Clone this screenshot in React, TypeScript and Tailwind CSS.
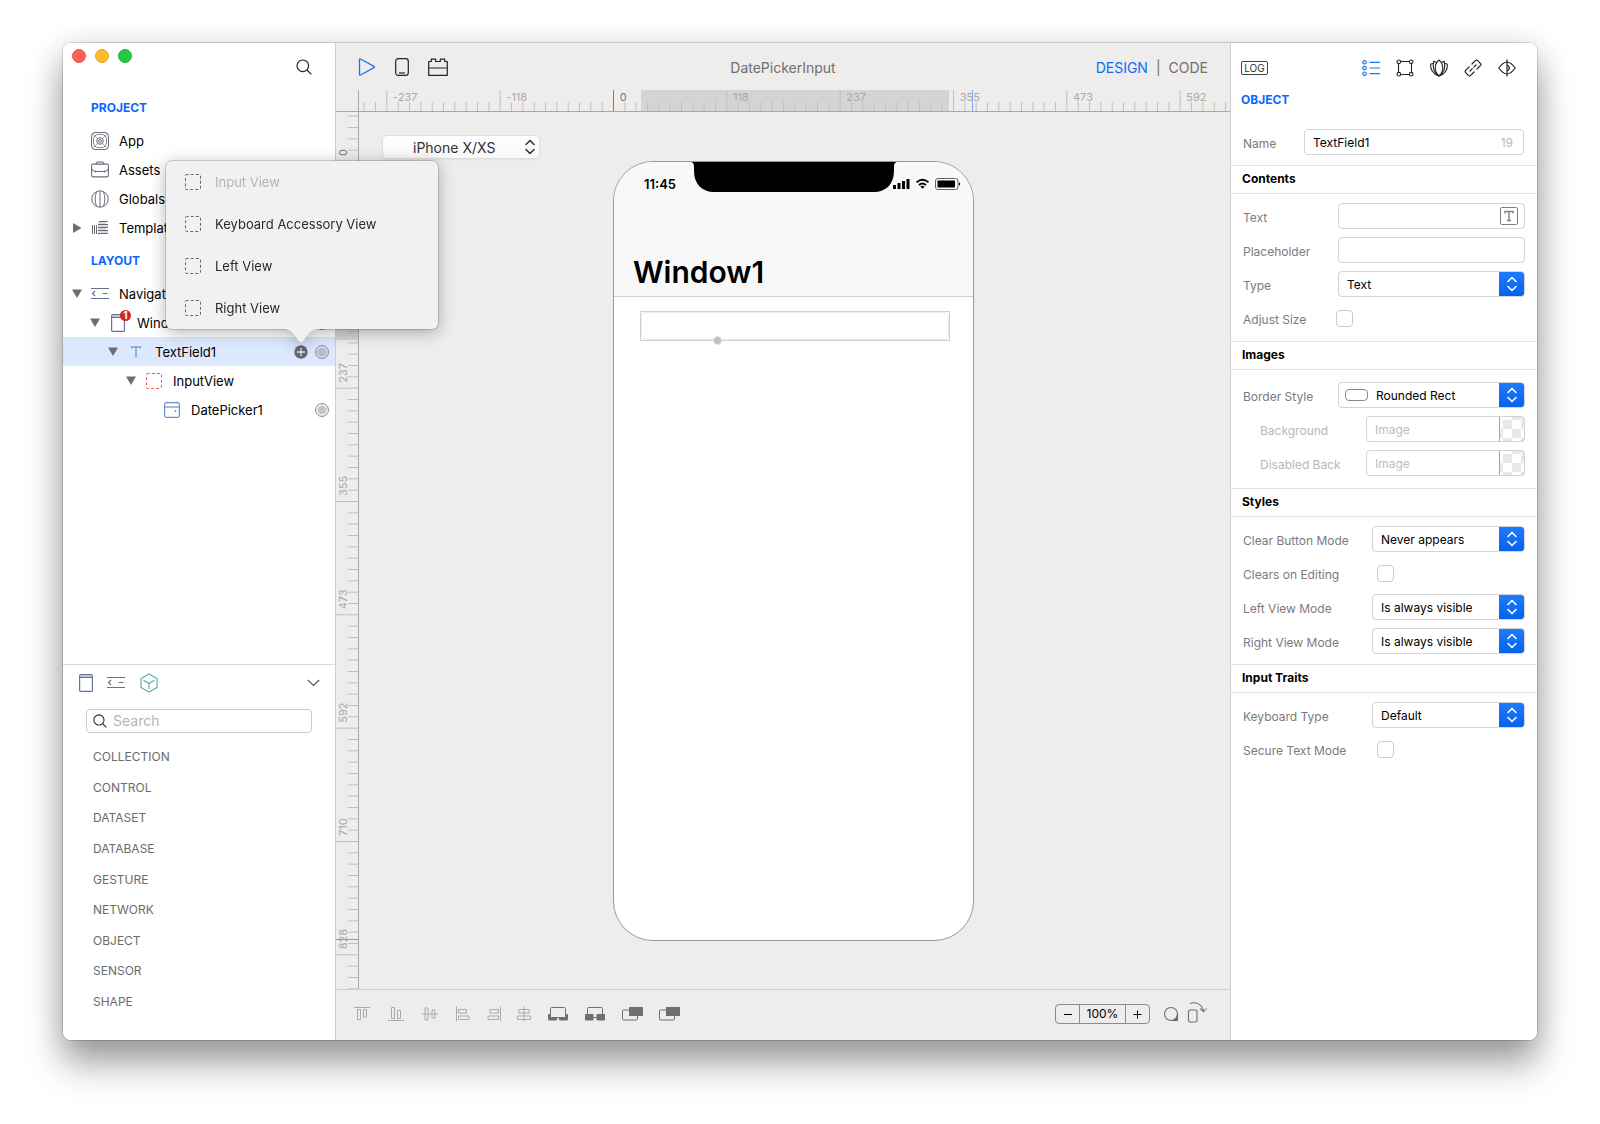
import type { ReactNode } from "react";

const STEP = 34 / 3;

function Magnifier({ className }: { className?: string }) {
  return (
    <svg className={className} width="16" height="16" viewBox="0 0 16 16" fill="none" stroke="#222" strokeWidth="1.2">
      <circle cx="6.8" cy="6.8" r="5.8" />
      <path d="M11 11l4.3 4.3" />
    </svg>
  );
}

function AppIcon() {
  return (
    <svg width="18" height="18" viewBox="0 0 18 18" fill="none" stroke="#6b6b78" strokeWidth="1">
      <rect x="0.5" y="0.5" width="17" height="17" rx="3.5" />
      <rect x="2.5" y="2.5" width="13" height="13" rx="4.5" strokeWidth="0.8" />
      <circle cx="9" cy="9" r="3.3" />
      <circle cx="9" cy="9" r="1.4" />
      <path d="M2 2l4.6 4.6M16 2l-4.6 4.6M2 16l4.6-4.6M16 16l-4.6-4.6" strokeWidth="0.6" />
    </svg>
  );
}

function AssetsIcon() {
  return (
    <svg width="18" height="18" viewBox="0 0 18 18" fill="none" stroke="#6b6b78" strokeWidth="1.1">
      <rect x="0.6" y="3.1" width="16.8" height="12.8" rx="1.6" />
      <path d="M5 3L6.2 1h5.6L13 3M0.8 8c1 2 2 2.500 3.200 2.500h10c1.200 0 2.200-.5 3.200-2.500" />
      <path d="M4.500 9.500v2M13.500 9.500v2" />
    </svg>
  );
}

function GlobalsIcon() {
  return (
    <svg width="18" height="18" viewBox="0 0 18 18" fill="none" stroke="#6b6b78" strokeWidth="1">
      <circle cx="9" cy="9" r="8.200" />
      <path d="M9 1v16M5.500 1.800c-1.800 4.500-1.800 10 0 14.400M12.500 1.800c1.800 4.500 1.800 10 0 14.400" />
    </svg>
  );
}

function TemplatesIcon() {
  return (
    <svg width="18" height="18" viewBox="0 0 18 18" fill="none" stroke="#6b6b78" strokeWidth="1">
      <path d="M1.500 6v9M3.500 6v9M5.500 6v9M8 2.500h9M7 5.500h10M7 8.500h10M7 11.500h10M7 14.500h10" />
      <path d="M7 4h8M7 7h10M7 10h8M7 13h10" strokeWidth="0.500" />
    </svg>
  );
}

function NavigationIcon() {
  return (
    <svg width="18" height="18" viewBox="0 0 18 18" fill="none" stroke="#66728f" strokeWidth="1.200">
      <path d="M0 3.500h18M0 13.500h18M4 6L1.500 8.500L4 11M11.500 8.500h5" />
    </svg>
  );
}

function WindowIcon() {
  return (
    <svg width="18" height="18" viewBox="0 0 18 18" fill="none" stroke="#66759b" strokeWidth="1.200">
      <rect x="2.600" y="0.600" width="12.800" height="16.800" rx="1" />
      <path d="M2.600 3.400h12.800" />
      <path d="M3 2h12" strokeWidth="1.600" stroke="#b3bdd2" />
    </svg>
  );
}

function DashedSquare({ stroke }: { stroke: string }) {
  return (
    <svg width="18" height="18" viewBox="0 0 18 18" fill="none" stroke={stroke} strokeWidth="1">
      <rect x="1.500" y="1.500" width="15" height="15" rx="1.200" strokeDasharray="3 2.100" strokeDashoffset="1" />
    </svg>
  );
}

function DatePickerIcon() {
  return (
    <svg width="18" height="18" viewBox="0 0 18 18" fill="none" stroke="#6f8fca" strokeWidth="1.200">
      <rect x="1.600" y="1.600" width="14.800" height="14.800" rx="1.800" />
      <path d="M1.600 6h14.800" />
      <circle cx="12.500" cy="10" r="1" fill="#6f8fca" stroke="none" />
    </svg>
  );
}

function CubeIcon() {
  return (
    <svg width="18" height="20" viewBox="0 0 18 20" fill="none" stroke="#5ba6a6" strokeWidth="1.100" strokeLinejoin="round">
      <path d="M9 1l8 4.500v9L9 19l-8-4.500v-9z" />
      <path d="M9 16V10.500M9 10.500L3.500 7.300M9 10.500l5.500-3.200" />
    </svg>
  );
}

function Chevrons({ stroke, className }: { stroke: string; className?: string }) {
  return (
    <svg className={className} width="12" height="16" viewBox="0 0 12 16" fill="none" stroke={stroke} strokeWidth="1.600" strokeLinecap="round" strokeLinejoin="round">
      <path d="M2 5.500l4-4 4 4M2 10.500l4 4 4-4" />
    </svg>
  );
}

function Triangle({ open }: { open: boolean }) {
  return (
    <svg width="10" height="10" viewBox="0 0 10 10" fill="#6e6e72">
      {open ? <path d="M0 0.500h10L5 9z" /> : <path d="M1 0l8.500 5L1 10z" />}
    </svg>
  );
}

function Target() {
  return (
    <button className="shrink-0" aria-label="Outlet">
      <svg width="14" height="14" viewBox="0 0 14 14">
        <circle cx="7" cy="7" r="6.400" fill="none" stroke="#7c7c80" />
        <circle cx="7" cy="7" r="4.600" fill="#8e8e93" fillOpacity="0.500" />
      </svg>
    </button>
  );
}

const subviews = [
  { label: "Input View", off: true },
  { label: "Keyboard Accessory View", off: false },
  { label: "Left View", off: false },
  { label: "Right View", off: false },
];

function SubviewMenu() {
  return (
    <div className="absolute bottom-[30px] -left-[128px] w-[272px] drop-shadow-[0_3px_8px_rgba(0,0,0,0.3)]">
      <ul className="rounded-md bg-[#f1f1f1] ring-1 ring-black/15">
        {subviews.map((v) => (
          <li key={v.label}>
            <button
              disabled={v.off}
              className="flex h-[42px] w-full items-center gap-[13px] pl-[18px] text-left text-[#2a2a2a] disabled:text-[#b4b4b4]"
            >
              <DashedSquare stroke="#6a6a6a" />
              <span className="pt-0.5">{v.label}</span>
            </button>
          </li>
        ))}
      </ul>
      <svg className="absolute top-full left-[118px]" width="34" height="14" viewBox="0 0 34 14">
        <path d="M0 0C6 0 9 4 12 8c2 3 3.500 5 5 5s3-2 5-5c3-4 6-8 12-8z" fill="#f1f1f1" />
      </svg>
    </div>
  );
}

type RowProps = {
  label: string;
  icon: ReactNode;
  indent: string;
  open?: boolean;
  outlet?: boolean;
  selected?: boolean;
};

function TreeRow({ label, icon, indent, open, outlet, selected }: RowProps) {
  return (
    <li className={`flex h-[29px] items-center pr-1.5 ${indent} ${selected ? "bg-[#dce8fd]" : ""}`}>
      <span className="w-[19px] shrink-0">{open !== undefined && <Triangle open={open} />}</span>
      <span className="mr-2.5 flex w-[18px] shrink-0 justify-center">{icon}</span>
      <span className="flex-1 pt-0.5 whitespace-nowrap">{label}</span>
      {selected && (
        <div className="relative mr-[7px] flex h-3.5 w-3.5">
          <button aria-label="Add subview">
            <svg width="14" height="14" viewBox="0 0 14 14">
              <circle cx="7" cy="7" r="6.700" fill="#66666d" />
              <path d="M7 3v8M3 7h8" stroke="#dce8fd" strokeWidth="1.300" />
            </svg>
          </button>
          <SubviewMenu />
        </div>
      )}
      {outlet && <Target />}
    </li>
  );
}

const categories = ["COLLECTION", "CONTROL", "DATASET", "DATABASE", "GESTURE", "NETWORK", "OBJECT", "SENSOR", "SHAPE"];

function Sidebar() {
  return (
    <aside className="relative z-10 flex w-[273px] shrink-0 flex-col rounded-l-lg border-r border-[#cfcfcf] bg-white text-[13px]">
      <header className="flex h-[54px] items-start pt-1.5 pr-[23px] pl-[9px]">
        <div className="flex flex-1 gap-[9px]">
          <button aria-label="Close" className="size-3.5 rounded-full border border-[#e2554d] bg-[#fe5f57]" />
          <button aria-label="Minimize" className="size-3.5 rounded-full border border-[#e5a62c] bg-[#febc2e]" />
          <button aria-label="Zoom" className="size-3.5 rounded-full border border-[#24b03a] bg-[#28c840]" />
        </div>
        <button aria-label="Find" className="mt-2.5">
          <Magnifier />
        </button>
      </header>
      <h2 className="h-[21px] pl-7 text-[12px] leading-[21px] font-bold text-[#0a66ff]">PROJECT</h2>
      <ul className="mt-2">
        <TreeRow label="App" icon={<AppIcon />} indent="pl-[9px]" />
        <TreeRow label="Assets" icon={<AssetsIcon />} indent="pl-[9px]" />
        <TreeRow label="Globals" icon={<GlobalsIcon />} indent="pl-[9px]" />
        <TreeRow label="Templates" icon={<TemplatesIcon />} indent="pl-[9px]" open={false} />
      </ul>
      <h2 className="mt-2 h-[21px] pl-7 text-[12px] leading-[21px] font-bold text-[#0a66ff]">LAYOUT</h2>
      <ul className="mt-2 flex-1">
        <TreeRow label="Navigation" icon={<NavigationIcon />} indent="pl-[9px]" open />
        <TreeRow
          label="Window1"
          indent="pl-[27px]"
          open
          outlet
          icon={
            <span className="relative">
              <WindowIcon />
              <span className="absolute -top-1 -right-1 size-[11px] rounded-full bg-[#dc1f1f] text-center text-[10px] leading-[11px] font-bold text-white">
                1
              </span>
            </span>
          }
        />
        <TreeRow
          label="TextField1"
          indent="pl-[45px]"
          open
          outlet
          selected
          icon={
            <svg width="10" height="12" viewBox="0 0 10 12" fill="none" stroke="#7d9ad6" strokeWidth="1.400">
              <path d="M0.500 2.500V1h9v1.500M5 1v10.500" />
            </svg>
          }
        />
        <TreeRow label="InputView" icon={<DashedSquare stroke="#e0605a" />} indent="pl-[63px]" open />
        <TreeRow label="DatePicker1" icon={<DatePickerIcon />} indent="pl-[81px]" outlet />
      </ul>
      <section className="flex h-[376px] flex-col border-t border-[#d9d9d9] pb-7">
        <div className="flex h-9 shrink-0 items-center pr-[15px] pl-[14px]">
          <button aria-label="Windows"><WindowIcon /></button>
          <button aria-label="Navigation" className="ml-3"><NavigationIcon /></button>
          <button aria-label="Objects" className="ml-[15px]"><CubeIcon /></button>
          <button aria-label="Collapse" className="ml-auto">
            <svg width="13" height="8" viewBox="0 0 13 8" fill="none" stroke="#555" strokeWidth="1.100">
              <path d="M0.800 1l5.700 5.500L12.200 1" />
            </svg>
          </button>
        </div>
        <label className="mt-2 mr-[23px] ml-[23px] flex h-6 shrink-0 items-center gap-1.5 rounded-[4px] border border-[#cacaca] pl-1.5">
          <Magnifier className="size-[14px] shrink-0" />
          <input
            type="text"
            aria-label="Search"
            placeholder="Search"
            className="h-5 min-w-0 flex-1 bg-transparent text-[14px] leading-5 outline-none placeholder:text-[#b5b5b5]"
          />
        </label>
        <ul className="mt-[14px] flex flex-1 flex-col justify-between pl-[30px] text-[12px] text-[#6b6b6b]">
          {categories.map((c) => (
            <li key={c} className="h-5 leading-5">{c}</li>
          ))}
        </ul>
      </section>
    </aside>
  );
}

function TopRuler() {
  const ticks = Array.from({ length: 78 }, (_, i) => i - 22);
  return (
    <svg className="h-[22px] w-full shrink-0" fontSize="11" fill="#a9a9a7">
      <rect x="305" y="0" width="308" height="21" fill="#d5d4d2" />
      {ticks.map((i) => {
        const x = 277.500 + i * STEP;
        return <line key={i} x1={x} x2={x} y1={i % 10 === 0 ? 0 : 12} y2="21" stroke="#bfbfbd" />;
      })}
      {["-237", "-118", "0", "118", "237", "355", "473", "592"].map((t, i) => (
        <text key={t} x={57 + i * STEP * 10} y="11" fill={t === "0" ? "#777" : undefined}>
          {t}
        </text>
      ))}
      <line x1="277.500" x2="277.500" y1="0" y2="21" stroke="#4d84f0" />
      <line x1="636.500" x2="636.500" y1="0" y2="21" stroke="#7ba4f5" />
      <line x1="22.500" x2="22.500" y1="0" y2="22" stroke="#a9a9a9" />
      <line x1="0" x2="100%" y1="21.500" y2="21.500" stroke="#a9a9a9" />
    </svg>
  );
}

function SideRuler() {
  const ticks = Array.from({ length: 78 }, (_, i) => i - 4);
  return (
    <svg className="w-[23px] shrink-0 self-stretch" fontSize="11" fill="#a9a9a7">
      <rect x="0" y="199" width="22" height="29" fill="#d5d4d2" />
      {ticks.map((i) => {
        const y = 49.500 + i * STEP;
        return <line key={i} x1={i !== 0 && i % 10 === 0 ? 0 : 12} x2="22" y1={y} y2={y} stroke="#bfbfbd" />;
      })}
      {["0", "118", "237", "355", "473", "592", "710", "828"].map((t, i) => (
        <text key={t} transform={`translate(11 ${44 + i * STEP * 10}) rotate(-90)`} fill={t === "0" ? "#777" : undefined}>
          {t}
        </text>
      ))}
      <line x1="0" x2="22" y1="827.500" y2="827.500" stroke="#6f9cf5" />
      <line x1="22.500" x2="22.500" y1="0" y2="100%" stroke="#a9a9a9" />
    </svg>
  );
}

function Phone() {
  return (
    <div className="relative flex h-[780px] w-[361px] flex-col overflow-hidden rounded-[40px] border border-[#999] bg-white text-black">
      <svg className="absolute top-0 left-[76px]" width="208" height="30" viewBox="0 0 208 30">
        <path d="M0 0h208c-3 0-4 1.500-4 5v4c0 13-8 21-20 21H24C12 30 4 22 4 9V5c0-3.500-1-5-4-5z" />
      </svg>
      <div className="flex h-[135px] flex-col justify-between border-b border-[#cfcfcf] bg-[#f8f8f8] pr-3 pl-[19px]">
        <div className="flex items-center pt-3.5 pl-[11px]">
          <span className="flex-1 text-[13px] leading-4 font-semibold">11:45</span>
          <svg width="68" height="12" viewBox="0 0 68 12">
            <path d="M0 7h3v4H0zM4.500 5h3v6h-3zM9 3h3v8H9zM13.500 1h3v10h-3z" />
            <g fill="none" stroke="#000" strokeWidth="1.800">
              <path d="M23.500 4.400c3.700-3.300 8.300-3.300 12 0M26 7c2.200-1.900 4.800-1.900 7 0" />
            </g>
            <path d="M27.300 8.500c1.400-1.100 3-1.100 4.400 0L29.500 10.800z" />
            <rect x="42.500" y="0.500" width="22.500" height="11" rx="2.500" fill="none" stroke="#666" />
            <rect x="44.500" y="2.500" width="17.500" height="7" rx="0.800" />
            <path d="M66 4.200c1.600.5 1.600 3 0 3.600z" />
          </svg>
        </div>
        <h1 className="pb-1 text-[30px] leading-10 font-semibold">Window1</h1>
      </div>
      <div className="relative mr-[23px] ml-[26px] mt-3.5 border border-[#cfcfcf]">
        <input aria-label="TextField1" type="text" className="block h-7 w-full rounded-[5px] border border-[#ececec] outline-none" />
        <span className="absolute -bottom-[5px] left-[72px] size-[9px] rounded-full border border-[#e3e3e3] bg-[#bfbfbf]" />
      </div>
    </div>
  );
}

const alignTools = [
  { label: "Align top", box: "w-[18px]", d: "M0 1.500h16M3.500 3.500h3v10h-3zM9.500 3.500h3v7.500h-3z" },
  { label: "Align bottom", box: "w-[18px]", d: "M0 14.500h16M3.500 1.500h3v11h-3zM9.500 4.500h3v8h-3z" },
  { label: "Align middle", box: "w-[18px]", d: "M0 8h16M3 2h3v12H3zM10 4h3v8h-3z" },
  { label: "Align left", box: "w-[15px]", d: "M1.500 0.500v15M3.500 3.500h8v3.500h-8zM3.500 10h10.500v3.500H3.500z" },
  { label: "Align right", box: "w-[15px]", d: "M14.500 0.500v15M4 3.500h8.500v3.500H4zM2 10h10.500v3.500H2z" },
  { label: "Align center", box: "w-[14px]", d: "M8 0.500v15M3 3.500h10v3.500H3zM1.500 10h13v3.500h-13z" },
];

function BottomBar() {
  return (
    <footer className="flex h-[51px] shrink-0 items-center border-t border-[#cfcfcd] pr-[23px] pb-0.5 pl-[17px]">
      <div className="flex items-center gap-4">
        {alignTools.map((t) => (
          <button key={t.label} aria-label={t.label} className={`flex justify-center ${t.box}`}>
            <svg className="shrink-0" width="16" height="16" viewBox="0 0 16 16" fill="none" stroke="#aaaaa8" strokeWidth="1">
              <path d={t.d} />
            </svg>
          </button>
        ))}
        <div className="flex gap-[15px]">
          <button aria-label="Embed">
            <svg width="22" height="16" viewBox="0 0 22 16" fill="none" stroke="#6f6f6f">
              <path d="M1.500 8.500H4v3h5.500V14h-8zM20.500 8.500H18v3h-5.500V14h8z" fill="#6f6f6f" />
              <rect x="3.500" y="1.500" width="15" height="10" rx="1" fill="#eeedeb" />
            </svg>
          </button>
          <button aria-label="Unembed">
            <svg width="22" height="16" viewBox="0 0 22 16" fill="none" stroke="#6f6f6f">
              <path d="M3.500 9V2.500q0-1 1-1h13q1 0 1 1V9M9 11.500h4" />
              <path d="M1.500 8.500h7.500V14H1.500zM13 8.500h7.500V14H13z" fill="#6f6f6f" />
            </svg>
          </button>
          <button aria-label="Bring forward">
            <svg width="22" height="16" viewBox="0 0 22 16" fill="none" stroke="#6f6f6f">
              <rect x="1.500" y="4" width="15" height="10" rx="1" />
              <rect x="8.500" y="1.500" width="13" height="8" fill="#6f6f6f" />
            </svg>
          </button>
          <button aria-label="Send backward">
            <svg width="22" height="16" viewBox="0 0 22 16" fill="none" stroke="#6f6f6f">
              <rect x="1.500" y="4" width="15" height="10" rx="1" />
              <rect x="8.500" y="1.500" width="13" height="8" fill="#6f6f6f" />
            </svg>
          </button>
        </div>
      </div>
      <div className="ml-auto flex h-5 items-stretch rounded-[4px] border border-[#8c8c8c] text-[12px] leading-[18px] text-black">
        <button aria-label="Zoom out" className="flex w-[23px] items-center justify-center">
          <span className="h-px w-2 bg-black" />
        </button>
        <span className="w-[47px] border-x border-[#8c8c8c] text-center">100%</span>
        <button aria-label="Zoom in" className="flex w-[23px] items-center justify-center">
          <svg width="9" height="9" viewBox="0 0 9 9" stroke="#000" strokeWidth="1"><path d="M4.500 0.500v8M0.500 4.500h8" /></svg>
        </button>
      </div>
      <button aria-label="Theme" className="ml-[13px]">
        <svg width="16" height="16" viewBox="0 0 16 16" fill="none" stroke="#6f6f6f" strokeWidth="1.100">
          <circle cx="8" cy="8" r="6.500" />
          <path d="M14.500 8v6.500H9.500c3-.8 5-3 5-6.500z" fill="#6f6f6f" />
        </svg>
      </button>
      <button aria-label="Rotate" className="ml-2 mb-1">
        <svg width="20" height="22" viewBox="0 0 20 22" fill="none" stroke="#6f6f6f" strokeWidth="1.100">
          <rect x="1.500" y="9" width="8.500" height="12" rx="1.500" />
          <path d="M3 2.500c6-2 12 .5 13.500 7.500M13.200 7.500l3.300 3.300 3-3.300" />
        </svg>
      </button>
    </footer>
  );
}

function Editor() {
  return (
    <main className="flex min-w-0 flex-1 flex-col overflow-hidden bg-[#eeedeb]">
      <header className="grid h-[47px] shrink-0 grid-cols-3 items-center pt-px pr-[22px] pl-[22px] text-[14px] text-[#6f6f6f]">
        <div className="flex items-center gap-[19px]">
          <button aria-label="Run">
            <svg width="18" height="18" viewBox="0 0 18 18" fill="none" stroke="#1a72ff" strokeWidth="1.300" strokeLinejoin="round">
              <path d="M1.500 1.500Q1.500.5 2.500 1L16 8.400q1 .6 0 1.200L2.500 17q-1 .5-1-.5z" />
            </svg>
          </button>
          <button aria-label="Device">
            <svg width="14" height="18" viewBox="0 0 14 18" fill="none" stroke="#222" strokeWidth="1.200">
              <rect x="0.700" y="0.700" width="12.600" height="16.600" rx="2.500" />
              <path d="M4 15h6" />
            </svg>
          </button>
          <button aria-label="Plugins">
            <svg width="20" height="18" viewBox="0 0 20 18" fill="none" stroke="#222" strokeWidth="1.200" strokeLinejoin="round">
              <path d="M0.700 17.300V3.500h2.600V1.200h4.400v2.300h4.600V1.200h4.400v2.300h2.600v13.800zM0.700 10h18.600" />
            </svg>
          </button>
        </div>
        <h1 className="text-center">DatePickerInput</h1>
        <nav className="flex justify-end gap-2">
          <a href="#design" className="text-[#0a6cff]">DESIGN</a>
          <span>|</span>
          <a href="#code">CODE</a>
        </nav>
      </header>
      <TopRuler />
      <div className="flex flex-1">
        <SideRuler />
        <div className="flex flex-1 flex-col pt-[23px]">
          <label className="ml-[23px] flex h-6 w-[158px] items-center rounded-[5px] border border-[#dededd] bg-linear-to-b from-white to-[#f8f8f8] pr-[3px] shadow-xs">
            <select aria-label="Device" className="h-full min-w-0 flex-1 appearance-none pl-[30px] text-[14px] text-[#333] outline-none">
              <option>iPhone X/XS</option>
            </select>
            <Chevrons stroke="#333" />
          </label>
          <div className="mt-0.5 flex justify-center pr-0.5">
            <Phone />
          </div>
        </div>
      </div>
      <BottomBar />
    </main>
  );
}

function Field({ label, id, width, dim, children }: { label: string; id: string; width: string; dim?: boolean; children: ReactNode }) {
  return (
    <div className="flex h-[26px] items-center pr-3 pl-3">
      <label htmlFor={id} className={`flex-1 pt-[3px] whitespace-nowrap ${dim ? "pl-[17px] text-[#b8b8b8]" : "text-[#7b7b7b]"}`}>
        {label}
      </label>
      <div className={width}>{children}</div>
    </div>
  );
}

function Dropdown({ id, value, icon }: { id: string; value: string; icon?: ReactNode }) {
  return (
    <div className="flex h-[26px] items-center overflow-hidden rounded-[4px] border border-[#d3d3d3] bg-white">
      {icon}
      <select id={id} className="h-full min-w-0 flex-1 appearance-none bg-transparent pt-px pl-2 text-black outline-none">
        <option>{value}</option>
      </select>
      <span className="-my-px -mr-px flex h-[26px] w-[26px] shrink-0 items-center justify-center bg-linear-to-b from-[#1f7dfb] to-[#0561ee]">
        <Chevrons stroke="#fff" />
      </span>
    </div>
  );
}

function Tick({ id }: { id: string }) {
  return <input id={id} type="checkbox" className="block size-[17px] appearance-none rounded-[4px] border border-[#cbcbcb] bg-white" />;
}

function ImageField({ id }: { id: string }) {
  return (
    <div className="flex h-[26px] overflow-hidden rounded-[4px] border border-[#d3d3d3]">
      <input id={id} type="text" placeholder="Image" className="min-w-0 flex-1 pt-0.5 pl-2 outline-none placeholder:text-[#bdbdbd]" />
      <svg className="-my-px -mr-px shrink-0" width="26" height="26" viewBox="0 0 26 26">
        <path d="M13 0h9v4h-9zM4 4h9v9H4zM22 4h4v9h-4zM0 13h4v9H0zM13 13h9v9h-9zM4 22h9v4H4zM22 22h3v3h-3z" fill="#e8e8e8" />
        <path d="M0.500 0.500h21q4 0 4 4v17q0 4-4 4h-21z" fill="none" stroke="#a6a6a6" />
      </svg>
    </div>
  );
}

function SectionTitle({ children }: { children: ReactNode }) {
  return <h3 className="flex h-[29px] items-center border-y border-[#e4e4e4] pb-px pl-[11px] font-bold text-black">{children}</h3>;
}

function Inspector() {
  return (
    <aside className="w-[307px] shrink-0 rounded-r-lg border-l border-[#cfcfcf] bg-white text-[12px]">
      <header className="flex h-[47px] items-center pt-[3px] pr-[21px] pl-2.5">
        <button className="h-3.5 w-[27px] rounded-[2px] border border-[#444] text-[10px] leading-3 text-[#333]">LOG</button>
        <div className="ml-auto flex gap-4">
          <button aria-label="Properties">
            <svg width="18" height="18" viewBox="0 0 18 18" fill="none" stroke="#1a72ff" strokeWidth="1.200">
              <path d="M7.500 3.300H18M7.500 9H18M7.500 14.700H18" />
              <circle cx="2.500" cy="3.300" r="1.700" />
              <circle cx="2.500" cy="9" r="1.700" />
              <circle cx="2.500" cy="14.700" r="1.700" />
            </svg>
          </button>
          <button aria-label="Frame">
            <svg width="18" height="18" viewBox="0 0 18 18" fill="none" stroke="#222" strokeWidth="1.100">
              <path d="M4.500 2.500h9M4.500 15.500h9M2.500 4.500v9M15.500 4.500v9" />
              <circle cx="2.800" cy="2.800" r="1.800" />
              <circle cx="15.200" cy="2.800" r="1.800" />
              <circle cx="2.800" cy="15.200" r="1.800" />
              <circle cx="15.200" cy="15.200" r="1.800" />
            </svg>
          </button>
          <button aria-label="Behavior">
            <svg width="18" height="18" viewBox="0 0 18 18" fill="none" stroke="#222" strokeWidth="1.100" strokeLinejoin="round">
              <path d="M9 1c5 4 5 12 0 16C4 13 4 5 9 1z" />
              <path d="M6.500 3.500L3.700 2.300C2.500 8 4 14 9 17M11.500 3.500l2.800-1.200C15.500 8 14 14 9 17" />
              <path d="M3.200 4.500L.8 5C0 10 3 15.500 9 17M14.800 4.500l2.400.5C18 10 15 15.500 9 17" />
            </svg>
          </button>
          <button aria-label="Connections">
            <svg width="18" height="18" viewBox="0 0 18 18" fill="none" stroke="#222" strokeWidth="1.200" strokeLinecap="round" strokeLinejoin="round">
              <path d="M8 5l3.300-3.300q1.200-1.200 2.400 0L16.300 4.300q1.200 1.200 0 2.400L13 10" />
              <path d="M5 8L1.700 11.300q-1.200 1.200 0 2.400L4.300 16.300q1.200 1.200 2.400 0L10 13" />
              <path d="M6 12l2.300-2.300M9.800 8.200L12 6" />
            </svg>
          </button>
          <button aria-label="Preview">
            <svg width="18" height="18" viewBox="0 0 18 18" fill="none" stroke="#222" strokeWidth="1.200" strokeLinejoin="round">
              <path d="M0.800 9C3 6 6 3 9 3S15 6 17.200 9C15 12 12 15 9 15S3 12 0.800 9zM9 0.500v17" />
              <path d="M9 6.500c3 0 3 5 0 5" />
            </svg>
          </button>
        </div>
      </header>
      <h2 className="h-5 pl-2.5 leading-5 font-bold text-[#0a66ff]">OBJECT</h2>
      <div className="pt-[19px] pb-2.5">
        <Field label="Name" id="name" width="w-[221px]">
          <div className="mr-px flex h-[26px] items-center rounded-[4px] border border-[#d3d3d3] pt-px pr-2.5 pl-2">
            <input id="name" type="text" defaultValue="TextField1" className="min-w-0 flex-1 text-black outline-none" />
            <span className="text-[#b8b8b8]">19</span>
          </div>
        </Field>
      </div>

      <SectionTitle>Contents</SectionTitle>
      <div className="flex flex-col gap-2 pt-[9px] pb-2.5">
        <Field label="Text" id="text" width="w-[187px]">
          <div className="flex h-[26px] items-center rounded-[4px] border border-[#d3d3d3] pr-1.5">
            <input id="text" type="text" className="min-w-0 flex-1 pl-2 outline-none" />
            <svg width="18" height="18" viewBox="0 0 18 18" fill="none" stroke="#808080">
              <rect x="0.500" y="0.500" width="17" height="17" rx="1.500" />
              <path d="M5 6.500V4.500h8v2M9 4.500v9M7 13.500h4" strokeWidth="1.400" />
            </svg>
          </div>
        </Field>
        <Field label="Placeholder" id="placeholder" width="w-[187px]">
          <input id="placeholder" type="text" className="block h-[26px] w-full rounded-[4px] border border-[#d3d3d3] pl-2 outline-none" />
        </Field>
        <Field label="Type" id="type" width="w-[187px]">
          <Dropdown id="type" value="Text" />
        </Field>
        <Field label="Adjust Size" id="adjust" width="w-[189px]">
          <Tick id="adjust" />
        </Field>
      </div>

      <SectionTitle>Images</SectionTitle>
      <div className="flex flex-col gap-2 py-3">
        <Field label="Border Style" id="border" width="w-[187px]">
          <Dropdown
            id="border"
            value="Rounded Rect"
            icon={<span className="ml-1.5 h-3 w-[23px] shrink-0 rounded-[4px] border border-[#8a8a8a]" />}
          />
        </Field>
        <Field label="Background" id="background" width="w-[159px]" dim>
          <ImageField id="background" />
        </Field>
        <Field label="Disabled Back" id="disabled" width="w-[159px]" dim>
          <ImageField id="disabled" />
        </Field>
      </div>

      <SectionTitle>Styles</SectionTitle>
      <div className="flex flex-col gap-2 pt-[9px] pb-2.5">
        <Field label="Clear Button Mode" id="clear" width="w-[153px]">
          <Dropdown id="clear" value="Never appears" />
        </Field>
        <Field label="Clears on Editing" id="clears" width="w-[148px]">
          <Tick id="clears" />
        </Field>
        <Field label="Left View Mode" id="left" width="w-[153px]">
          <Dropdown id="left" value="Is always visible" />
        </Field>
        <Field label="Right View Mode" id="right" width="w-[153px]">
          <Dropdown id="right" value="Is always visible" />
        </Field>
      </div>

      <SectionTitle>Input Traits</SectionTitle>
      <div className="flex flex-col gap-2 pt-[9px] pb-2.5">
        <Field label="Keyboard Type" id="keyboard" width="w-[153px]">
          <Dropdown id="keyboard" value="Default" />
        </Field>
        <Field label="Secure Text Mode" id="secure" width="w-[148px]">
          <Tick id="secure" />
        </Field>
      </div>
    </aside>
  );
}

export default function App() {
  return (
    <div className="flex min-h-screen bg-white px-[63px] pt-[43px] pb-[84px] font-['Inter',sans-serif]">
      <div className="flex flex-1 rounded-lg shadow-[0_0_0_1px_rgba(0,0,0,0.15),0_24px_36px_rgba(0,0,0,0.35),0_4px_30px_rgba(0,0,0,0.15)]">
        <Sidebar />
        <Editor />
        <Inspector />
      </div>
    </div>
  );
}
